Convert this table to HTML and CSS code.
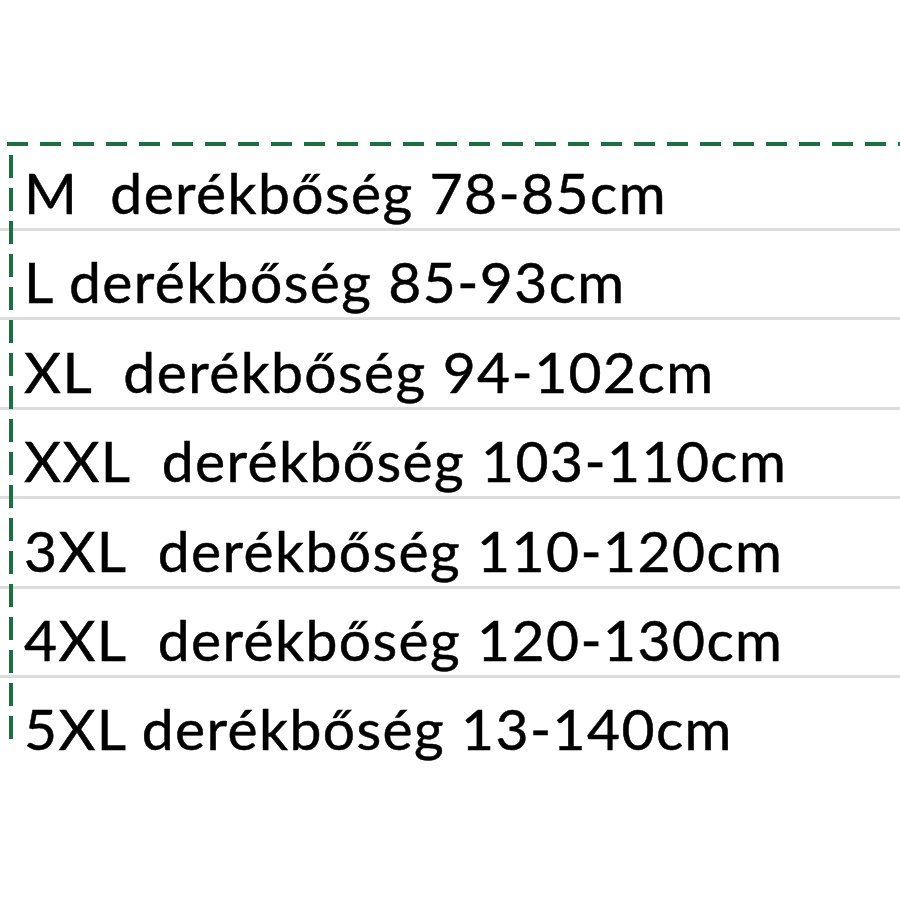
FILE: index.html
```html
<!DOCTYPE html>
<html lang="hu">
<head>
<meta charset="utf-8">
<title>Méretek</title>
<link rel="stylesheet" href="styles.css">
</head>
<body>
<div class="sheet">
  <div class="row"><span class="cell">M  derékbőség 78-85cm</span></div>
  <div class="row"><span class="cell">L derékbőség 85-93cm</span></div>
  <div class="row"><span class="cell">XL  derékbőség 94-102cm</span></div>
  <div class="row"><span class="cell">XXL  derékbőség 103-110cm</span></div>
  <div class="row"><span class="cell">3XL  derékbőség 110-120cm</span></div>
  <div class="row"><span class="cell">4XL  derékbőség 120-130cm</span></div>
  <div class="row last"><span class="cell">5XL derékbőség 13-140cm</span></div>
</div>
</body>
</html>
```
FILE: styles.css
```css
html, body {
  margin: 0;
  padding: 0;
  background: #ffffff;
}
body {
  width: 900px;
  height: 900px;
  overflow: hidden;
}
.sheet {
  position: relative;
  margin-top: 146px;
  display: flex;
  flex-direction: column;
}
.sheet::before {
  content: "";
  position: absolute;
  left: 7px;
  right: 0;
  top: -4px;
  height: 4px;
  background: repeating-linear-gradient(to right, #1d6f42 0 21px, transparent 21px 33px);
}
.sheet::after {
  content: "";
  position: absolute;
  left: 9px;
  width: 4px;
  top: 9px;
  height: 592px;
  background: repeating-linear-gradient(to bottom, #1d6f42 0 23px, transparent 23px 33px);
}
.row {
  height: 86.4px;
  border-bottom: 3px solid #dcdcdc;
  display: flex;
  align-items: flex-end;
  box-sizing: content-box;
}
.row:first-child {
  height: 82px;
}
.row.last {
  border-bottom: none;
}
.cell {
  white-space: pre;
  font-family: Lato, "Open Sans", sans-serif;
  font-size: 57px;
  line-height: 1;
  letter-spacing: 1.4px;
  color: #000;
  -webkit-text-stroke: 0.5px #000;
  padding-left: 24px;
  padding-bottom: 7px;
}
```
